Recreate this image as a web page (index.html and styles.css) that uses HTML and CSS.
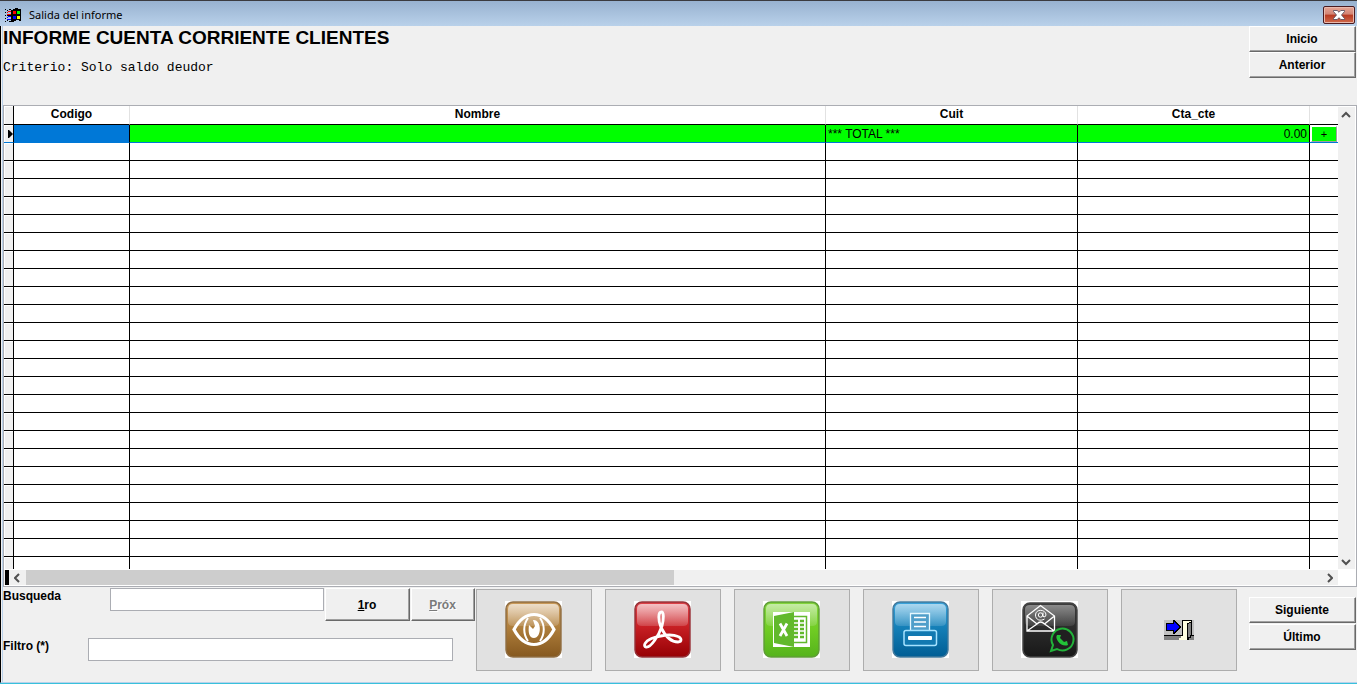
FILE: index.html
```
<!DOCTYPE html>
<html lang="es">
<head>
<meta charset="utf-8">
<title>Salida del informe</title>
<link rel="stylesheet" href="styles.css">
</head>
<body>
<div class="window">
  <header class="titlebar">
    <svg class="app-icon" viewBox="0 0 16 14" shape-rendering="crispEdges" aria-hidden="true">
      <path d="M6 2h2V1h2V0h3v1h3v12h-2v-1h-3v1H9v1H6z" fill="#000"/>
      <path d="M0 1h1v1H0zM2 2h1v1H2zM4 1h2v1H4zM0 4h1v1H0zM0 7h1v1H0zM0 10h1v1H0zM0 13h1v1H0zM2 12h1v1H2zM4 13h2v1H4zM2 7h4v1H2z" fill="#000"/>
      <path d="M2 4h1v1H2zM3 3h3v1H3zM2 6h4v1H2zM8 3h3v3H8z" fill="#f00"/>
      <path d="M2 9h1v1H2zM3 8h3v1H3zM2 11h4v1H2zM8 8h3v3H8z" fill="#00f"/>
      <path d="M12 3h3v3h-3z" fill="#0f0"/>
      <path d="M12 8h3v3h-3z" fill="#ff0"/>
    </svg>
    <span class="titlebar-text">Salida del informe</span>
    <button class="close" type="button" aria-label="Cerrar">
      <svg viewBox="0 0 12 10" aria-hidden="true"><path d="M.5 .5h3.700L6 2.300 7.800 .5h3.700v1L8.500 5l3 3.500v1H7.800L6 7.700 4.200 9.500H.5v-1L3.500 5l-3-3.500z" fill="#fff" stroke="#4c4658" stroke-width=".8"/></svg>
    </button>
  </header>

  <main class="content">
    <section class="heading">
      <div class="heading-text">
        <h1>INFORME CUENTA CORRIENTE CLIENTES</h1>
        <p class="criteria">Criterio: Solo saldo deudor</p>
      </div>
      <nav class="pager">
        <button class="btn" type="button">Inicio</button>
        <button class="btn" type="button">Anterior</button>
      </nav>
    </section>

    <section class="grid">
      <div class="grid-view">
        <table>
          <colgroup><col class="c-mark"><col class="c-code"><col><col class="c-cuit"><col class="c-cta"><col class="c-more"></colgroup>
          <thead>
            <tr><td class="mark"></td><th>Codigo</th><th>Nombre</th><th>Cuit</th><th>Cta_cte</th><th></th></tr>
          </thead>
          <tbody>
            <tr class="total"><td class="mark"><svg class="pointer" viewBox="0 0 5 8" aria-hidden="true"><path d="M0 0h1l4 4-4 4H0z"/></svg></td><td class="selected"></td><td></td><td>*** TOTAL ***</td><td class="num">0.00</td><td class="more"><button class="plus" type="button">+</button></td></tr>
            <tr><td class="mark"></td><td></td><td></td><td></td><td></td><td></td></tr>
            <tr><td class="mark"></td><td></td><td></td><td></td><td></td><td></td></tr>
            <tr><td class="mark"></td><td></td><td></td><td></td><td></td><td></td></tr>
            <tr><td class="mark"></td><td></td><td></td><td></td><td></td><td></td></tr>
            <tr><td class="mark"></td><td></td><td></td><td></td><td></td><td></td></tr>
            <tr><td class="mark"></td><td></td><td></td><td></td><td></td><td></td></tr>
            <tr><td class="mark"></td><td></td><td></td><td></td><td></td><td></td></tr>
            <tr><td class="mark"></td><td></td><td></td><td></td><td></td><td></td></tr>
            <tr><td class="mark"></td><td></td><td></td><td></td><td></td><td></td></tr>
            <tr><td class="mark"></td><td></td><td></td><td></td><td></td><td></td></tr>
            <tr><td class="mark"></td><td></td><td></td><td></td><td></td><td></td></tr>
            <tr><td class="mark"></td><td></td><td></td><td></td><td></td><td></td></tr>
            <tr><td class="mark"></td><td></td><td></td><td></td><td></td><td></td></tr>
            <tr><td class="mark"></td><td></td><td></td><td></td><td></td><td></td></tr>
            <tr><td class="mark"></td><td></td><td></td><td></td><td></td><td></td></tr>
            <tr><td class="mark"></td><td></td><td></td><td></td><td></td><td></td></tr>
            <tr><td class="mark"></td><td></td><td></td><td></td><td></td><td></td></tr>
            <tr><td class="mark"></td><td></td><td></td><td></td><td></td><td></td></tr>
            <tr><td class="mark"></td><td></td><td></td><td></td><td></td><td></td></tr>
            <tr><td class="mark"></td><td></td><td></td><td></td><td></td><td></td></tr>
            <tr><td class="mark"></td><td></td><td></td><td></td><td></td><td></td></tr>
            <tr><td class="mark"></td><td></td><td></td><td></td><td></td><td></td></tr>
            <tr><td class="mark"></td><td></td><td></td><td></td><td></td><td></td></tr>
            <tr><td class="mark"></td><td></td><td></td><td></td><td></td><td></td></tr>
          </tbody>
        </table>
      </div>
      <div class="vscroll">
        <svg viewBox="0 0 10 7" aria-hidden="true"><path d="M1 6l4-4 4 4"/></svg>
        <svg viewBox="0 0 10 7" aria-hidden="true"><path d="M1 1l4 4 4-4"/></svg>
      </div>
      <div class="hscroll">
        <span class="split"></span>
        <span class="arrow"><svg viewBox="0 0 7 10" aria-hidden="true"><path d="M5 1L1 5l4 4"/></svg></span>
        <span class="track"><span class="thumb"></span></span>
        <span class="arrow"><svg viewBox="0 0 7 10" aria-hidden="true"><path d="M2 1l4 4-4 4"/></svg></span>
      </div>
    </section>

    <section class="actions">
      <form class="search">
        <div class="search-row">
          <label class="find-label" for="find">Busqueda</label>
          <input class="find" id="find" type="text">
          <button class="btn first" type="button"><span><u>1</u>ro</span></button>
          <button class="btn next" type="button" disabled><span><u>P</u>róx</span></button>
        </div>
        <div class="search-row">
          <label class="filter-label" for="filter">Filtro (*)</label>
          <input class="filter" id="filter" type="text">
        </div>
      </form>

      <div class="tools">
        <button class="tool" type="button" aria-label="Vista previa">
          <svg class="tile" viewBox="0 0 57 57" aria-hidden="true">
            <defs><linearGradient id="tan" x2="0" y2="1"><stop offset="0" stop-color="#c99a5a"/><stop offset=".45" stop-color="#b07f3c"/><stop offset="1" stop-color="#85581f"/></linearGradient>
            <linearGradient id="gloss" x2="0" y2="1"><stop offset="0" stop-color="#fff" stop-opacity=".68"/><stop offset="1" stop-color="#fff" stop-opacity=".16"/></linearGradient></defs>
            <rect x="1" y="1" width="55" height="55" rx="7" fill="url(#tan)" stroke="#8f6d43" stroke-width="1.500"/>
            <path d="M3 8q0-5 5-5h41q5 0 5 5v13q0 4-5 4H8q-5 0-5-4z" fill="url(#gloss)"/>
            <path d="M9 28.500Q17 13.500 29 13.500T49 28.500Q41 43.500 29 43.500T9 28.500z" fill="none" stroke="#fff" stroke-width="3.200"/>
            <path d="M23 17c-5 7-5 16 0 23M35 17c5 7 5 16 0 23" fill="none" stroke="#fff" stroke-width="2"/>
            <path d="M28 19c9-1 9 18 1 18-5 0-6-6-5-13l4 4 2-3z" fill="#fff"/>
          </svg>
        </button>
        <button class="tool" type="button" aria-label="Exportar a PDF">
          <svg class="tile" viewBox="0 0 57 57" aria-hidden="true">
            <defs><linearGradient id="red" x2="0" y2="1"><stop offset="0" stop-color="#dd4249"/><stop offset=".45" stop-color="#c71f24"/><stop offset="1" stop-color="#960004"/></linearGradient></defs>
            <rect x="1" y="1" width="55" height="55" rx="7" fill="url(#red)" stroke="#943238" stroke-width="1.500"/>
            <path d="M3 8q0-5 5-5h41q5 0 5 5v13q0 4-5 4H8q-5 0-5-4z" fill="url(#gloss)"/>
            <path d="M27.500 11c-3.500 0-3.500 8-.5 15.500 4 8 10 14.500 17 14.500 4 0 4-4 0-5.500-7-3-19-1-26.500 2-7 3-8.500 8-5.500 8.500 5 1 13-12 16-21 1.800-7 2-14-.5-14z" fill="none" stroke="#fff" stroke-width="2.800" stroke-linejoin="round"/>
          </svg>
        </button>
        <button class="tool" type="button" aria-label="Exportar a Excel">
          <svg class="tile" viewBox="0 0 57 57" aria-hidden="true">
            <defs><linearGradient id="green" x2="0" y2="1"><stop offset="0" stop-color="#83d63d"/><stop offset=".5" stop-color="#70cc23"/><stop offset="1" stop-color="#55b31c"/></linearGradient></defs>
            <rect x="1" y="1" width="55" height="55" rx="7" fill="url(#green)" stroke="#5f9d37" stroke-width="1.500"/>
            <path d="M3 8q0-5 5-5h41q5 0 5 5v13q0 4-5 4H8q-5 0-5-4z" fill="url(#gloss)" opacity=".8"/>
            <path d="M10 11h37v35H10z" fill="#fff"/>
            <path d="M11 15l20-4v35l-20-4z" fill="#62b92c"/>
            <path d="M31 15.500h12.500v26H31" fill="none" stroke="#62b92c" stroke-width="1.500"/>
            <path d="M31 20h4M31 24h4M31 28h4M31 32h4M31 36h4M37 20h4M37 24h4M37 28h4M37 32h4M37 36h4" stroke="#62b92c" stroke-width="2.500"/>
            <path d="M17 22.500l7 12.500M24 22.500l-7 12.500" stroke="#fff" stroke-width="2.800"/>
          </svg>
        </button>
        <button class="tool" type="button" aria-label="Imprimir">
          <svg class="tile" viewBox="0 0 57 57" aria-hidden="true">
            <defs><linearGradient id="blue" x2="0" y2="1"><stop offset="0" stop-color="#3ba4dc"/><stop offset=".45" stop-color="#1580b8"/><stop offset="1" stop-color="#005d94"/></linearGradient></defs>
            <rect x="1" y="1" width="55" height="55" rx="7" fill="url(#blue)" stroke="#42799c" stroke-width="1.500"/>
            <path d="M3 8q0-5 5-5h41q5 0 5 5v13q0 4-5 4H8q-5 0-5-4z" fill="url(#gloss)" opacity=".85"/>
            <path d="M18.500 29V12.500h19V29" fill="#4f9fca" stroke="#e5f8ff" stroke-width="1.300"/>
            <path d="M22 16.500h12M22 21h12M22 25.500h12" stroke="#fff" stroke-width="1.300"/>
            <rect x="12" y="29.500" width="32.500" height="15" rx="2" fill="#1279b1" stroke="#a5e2ff" stroke-width="1.500"/>
            <rect x="16" y="35" width="24" height="4" rx="1" fill="#fff"/>
          </svg>
        </button>
        <button class="tool" type="button" aria-label="Enviar por correo o WhatsApp">
          <svg class="tile" viewBox="0 0 57 57" aria-hidden="true">
            <defs><linearGradient id="dark" x2="0" y2="1"><stop offset="0" stop-color="#3c3c3c"/><stop offset="1" stop-color="#181818"/></linearGradient></defs>
            <rect x="2" y="2" width="54" height="54" rx="7" fill="url(#dark)" stroke="#444" stroke-width="1.500"/>
            <path d="M4 8q0-4 5-4h40q5 0 5 5v12q0 4-5 4H9q-5 0-5-4z" fill="url(#gloss)" opacity=".6"/>
            <path d="M6 15L19.500 4.500 33.500 15v15H6zL16 23l-10 7M33.500 15L23.500 23l10 7M16 23q3.500-4 7.500 0" fill="none" stroke="#fff" stroke-width="1.300"/>
            <circle cx="19.500" cy="14" r="2.200" fill="none" stroke="#fff"/>
            <path d="M22 11.500v4q2.500 1.500 3-1.500c0-6-10.500-6.500-10.500 0 0 5 5 6.500 9 4" fill="none" stroke="#fff"/>
            <path d="M30 50l2-6a11 11 0 1 1 4 4z" fill="#202020" stroke="#22b33a" stroke-width="2"/>
            <path d="M36 34c-3 4 5 13 11 10l-1-4-3 1-4-4 1-3z" fill="#22c438"/>
          </svg>
        </button>
        <button class="tool" type="button" aria-label="Salir">
          <svg class="exit" viewBox="0 0 30 20" shape-rendering="crispEdges" aria-hidden="true">
            <path d="M0 0h30v20H0z" fill="#c0c0c0"/>
            <path d="M0 15h30v5H0z" fill="#808080"/>
            <path d="M0 15h18v1H0zM28 15h2v1h-2z" fill="#000"/>
            <path d="M18 0h10v16h-1v2h-2v2h-2V16h-5z" fill="#000"/>
            <path d="M19 1h8v1h-2v1h-2v17h-8v-2h2v-2h2z" fill="#ffffe1"/>
            <path d="M24 4h1V3h2v12h-1v2h-2z" fill="#808080"/>
            <path d="M2 3h7V0h2l6 7-6 7H9v-3H2z" fill="#000"/>
            <path d="M3 4h7V2l5 5-5 5v-2H3z" fill="#00f"/>
          </svg>
        </button>
      </div>

      <nav class="pager">
        <button class="btn" type="button">Siguiente</button>
        <button class="btn" type="button">Último</button>
      </nav>
    </section>
  </main>
</div>
</body>
</html>
```
FILE: styles.css
```
* {
  box-sizing: border-box;
}

body {
  margin: 0;
  background: #f0f0f0;
  color: #000;
  font-family: "Liberation Sans", Arial, sans-serif;
  font-size: 12px;
  line-height: 14px;
}

button,
input {
  margin: 0;
  font: inherit;
  color: inherit;
}

svg {
  display: block;
}

.window {
  display: flex;
  flex-direction: column;
  height: 100vh;
  min-width: 1240px;
  border-bottom: 1px solid #38c1dc;
}

.titlebar {
  display: flex;
  flex: none;
  align-items: center;
  gap: 8px;
  height: 26px;
  padding: 2px 2px 0 5px;
  border-top: 1px solid #3b3b3f;
  background: linear-gradient(#98b2d0, #b9d1ea);
}

.app-icon {
  width: 16px;
  height: 14px;
}

.titlebar-text {
  flex: 1;
  font-family: "Noto Sans", "Segoe UI", sans-serif;
  font-size: 11px;
}

.close {
  display: flex;
  align-items: center;
  justify-content: center;
  width: 32px;
  height: 18px;
  padding: 0;
  border: 1px solid #4a1a20;
  border-radius: 2px;
  background: linear-gradient(#e6a596, #d28474 45%, #b83a22 50%, #cf6a4c);
  box-shadow: inset 0 0 0 1px #e9b9ad;
}

.close svg {
  width: 12px;
  height: 10px;
}

.content {
  display: flex;
  flex: 1;
  flex-direction: column;
  min-height: 0;
  border-left: 1px solid #000;
  border-bottom: 1px solid #b9d1ea;
  box-shadow: inset 1px 0 #f0f0f0, inset 2px 0 #b9d1ea;
  padding-left: 2px;
}

.heading {
  display: flex;
  flex: none;
  justify-content: space-between;
  height: 79px;
  padding-right: 1px;
}

h1 {
  margin: 0;
  font-size: 19px;
  line-height: 24px;
}

.criteria {
  margin: 11px 0 0;
  font-family: "Liberation Mono", "Courier New", monospace;
  font-size: 13px;
}

.pager {
  display: flex;
  flex: none;
  flex-direction: column;
  width: 107px;
}

.btn {
  height: 26px;
  padding: 0 1px 0 0;
  border: 1px solid;
  border-color: #fff #696969 #696969 #fff;
  background: #f0f0f0;
  box-shadow: inset -1px -1px #a0a0a0;
  font-weight: bold;
}

.btn:disabled {
  color: #7a7a7a;
  text-shadow: 1px 1px #fff;
}

.grid {
  display: grid;
  flex: 1;
  grid-template-columns: 1fr 18px;
  grid-template-rows: 1fr 17px;
  min-height: 0;
  border: 1px solid #abadb3;
  background: #fff;
}

.grid-view {
  overflow: hidden;
  min-height: 0;
}

table {
  width: 100%;
  table-layout: fixed;
  border-spacing: 0;
}

.c-mark {
  width: 10px;
}

.c-code {
  width: 116px;
}

.c-cuit {
  width: 252px;
}

.c-cta {
  width: 232px;
}

.c-more {
  width: 28px;
}

th,
td {
  height: 18px;
  padding: 0 2px;
  border-right: 1px solid #000;
  border-bottom: 1px solid #000;
  line-height: 16px;
}

thead th,
thead td {
  height: 19px;
}

th {
  border-right-color: #e2e2e2;
  padding-bottom: 2px;
}

tr > :last-child {
  border-right: 0;
}

.mark {
  padding: 0;
  background: #f0f0f0;
  box-shadow: inset 1px 1px #fff;
}

.pointer {
  width: 5px;
  height: 8px;
  margin-left: auto;
}

.total td {
  padding-top: 1px;
  border-bottom-color: #0078d7;
}

.total td:not(.mark) {
  background: #0f0;
}

.total td.selected {
  background: #0078d7;
}

.num {
  text-align: right;
}

.total td.more {
  padding: 0;
  background: #fff;
}

.plus {
  display: block;
  width: 26px;
  height: 16px;
  margin-left: 1px;
  padding: 0;
  border: 1px solid;
  border-color: #fff #a0a0a0 #a0a0a0 #fff;
  background: #0f0;
  font-size: 11px;
  line-height: 12px;
}

.vscroll {
  display: flex;
  flex-direction: column;
  align-items: center;
  justify-content: space-between;
  margin: 1px 1px 0 0;
  padding: 4px 1px 3px 0;
  background: #f0f0f0;
}

.vscroll svg {
  width: 10px;
  height: 7px;
}

.vscroll path,
.hscroll path {
  fill: none;
  stroke: #505050;
  stroke-width: 2;
}

.hscroll {
  display: flex;
  margin: 1px 0;
  background: #f0f0f0;
}

.split {
  width: 4px;
  margin-left: 1px;
  background: #000;
}

.arrow {
  display: flex;
  align-items: center;
  justify-content: center;
  width: 17px;
}

.arrow svg {
  width: 7px;
  height: 10px;
}

.track {
  display: flex;
  flex: 1;
}

.thumb {
  width: 50%;
  background: #cdcdcd;
}

.actions {
  display: flex;
  flex: none;
  padding: 1px 1px 11px 0;
}

.search {
  display: flex;
  flex: none;
  flex-direction: column;
  gap: 17px;
  width: 473px;
}

.search-row {
  display: flex;
  align-items: flex-start;
  gap: 1px;
}

label {
  padding-top: 1px;
  font-weight: bold;
}

.find-label {
  width: 106px;
}

.filter-label {
  width: 84px;
}

input {
  height: 23px;
  padding: 0 3px;
  border: 1px solid #abadb3;
  background: #fff;
}

.find {
  width: 214px;
}

.filter {
  width: 365px;
}

.first {
  width: 85px;
  height: 33px;
}

.next {
  width: 64px;
  height: 33px;
}

.tools {
  display: flex;
  flex: none;
  gap: 13px;
  padding-top: 1px;
}

.tool {
  display: flex;
  align-items: center;
  justify-content: center;
  width: 116px;
  height: 82px;
  padding: 0 1px 1px 0;
  border: 1px solid #adadad;
  background: #e1e1e1;
}

.tile {
  width: 57px;
  height: 57px;
  background: #fff;
}

.exit {
  width: 30px;
  height: 20px;
}

.actions .pager {
  gap: 1px;
  margin-left: auto;
  padding-top: 9px;
}
```
